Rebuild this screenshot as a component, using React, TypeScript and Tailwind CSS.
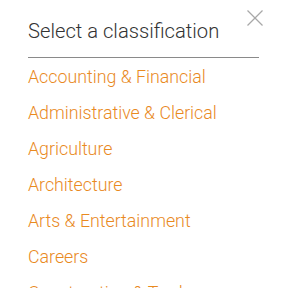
import React from 'react';

const classifications = [
  'Accounting & Financial',
  'Administrative & Clerical',
  'Agriculture',
  'Architecture',
  'Arts & Entertainment',
  'Careers',
  'Construction & Trades',
];

export default function App() {
  return (
    <div className="h-[288px] w-[288px] overflow-hidden bg-white font-['Roboto',sans-serif]">
      <div className="pl-7 pr-[29px]">
        <div className="relative flex items-center border-b border-[#8a8a8a] pt-[19px] pb-[14px]">
          <h2 className="text-[20.2px] font-light leading-6 text-[#333333]">Select a classification</h2>
          <button className="absolute right-[-5px] top-[9px] text-[#a8a8a8]" aria-label="Close">
            <svg width="18" height="18" viewBox="0 0 18 18" fill="none" stroke="currentColor" strokeWidth="1.3">
              <line x1="1.5" y1="1.5" x2="16.5" y2="16.5" />
              <line x1="16.5" y1="1.5" x2="1.5" y2="16.5" />
            </svg>
          </button>
        </div>
        <ul className="pt-[1px]">
          {classifications.map((c) => (
            <li key={c} className="text-[17.8px] font-light leading-9 text-[#e98a1f]">
              {c}
            </li>
          ))}
        </ul>
      </div>
    </div>
  );
}
